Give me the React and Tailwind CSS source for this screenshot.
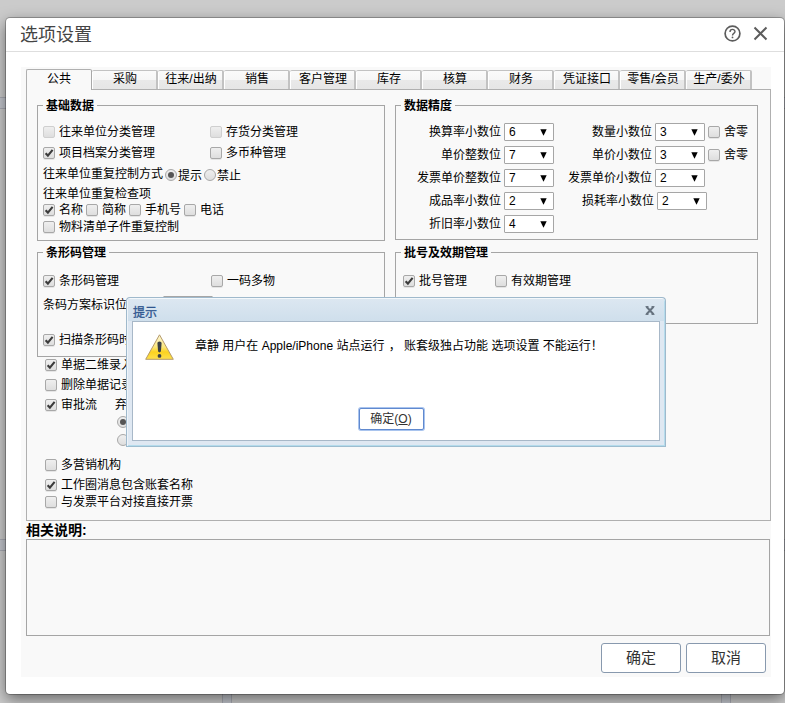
import React from "react";

const TABS = ["公共", "采购", "往来/出纳", "销售", "客户管理", "库存", "核算", "财务", "凭证接口", "零售/会员", "生产/委外"];

function Check({ checked, disabled }) {
  return (
    <span
      className={
        "flex h-3 w-3 shrink-0 items-center justify-center rounded-[2px] border bg-linear-to-b from-[#efefef] to-[#dedede] " +
        (disabled ? "border-[#cfcfcf]" : "border-[#a8a8a8] shadow-[0_1px_0_rgba(0,0,0,0.08)]")
      }
    >
      {checked && (
        <svg width="10" height="10" viewBox="0 0 10 10" className="shrink-0">
          <path d="M1.6 5.2 L3.9 7.6 L8.6 1.9" fill="none" stroke="#3c3c3c" strokeWidth="2.1" />
        </svg>
      )}
    </span>
  );
}

function Radio({ checked }) {
  return (
    <span className="flex h-3 w-3 shrink-0 items-center justify-center rounded-full border border-[#a8a8a8] bg-linear-to-b from-[#efefef] to-[#dedede]">
      {checked && <span className="h-1.5 w-1.5 rounded-full bg-[#555]" />}
    </span>
  );
}

function Option({ label, checked, disabled, className = "" }) {
  return (
    <label className={"flex shrink-0 items-center gap-1 " + className}>
      <Check checked={checked} disabled={disabled} />
      <span>{label}</span>
    </label>
  );
}

function Select({ value }) {
  return (
    <span className="flex h-[18px] w-[50px] shrink-0 items-center justify-between rounded-[1px] border border-[#a6a6a6] bg-white pr-[6px] pl-1">
      <span>{value}</span>
      <svg width="7" height="7" viewBox="0 0 7 7" className="mt-px">
        <path d="M0.3 0.3 H6.7 L3.5 6.8 Z" fill="#000" />
      </svg>
    </span>
  );
}

function Group({ title, className, children }) {
  return (
    <section className={"flex flex-col border border-[#a5a5a5] " + className}>
      <h3 className="-mt-px flex h-px items-center pl-[5px] font-bold">
        <span className="bg-[#f9f9f9] px-[3px] leading-4">{title}</span>
      </h3>
      {children}
    </section>
  );
}

function Precision({ label, value, className = "" }) {
  return (
    <div className={"flex h-[23px] items-center justify-end gap-[3px] " + className}>
      <span>{label}</span>
      <Select value={value} />
    </div>
  );
}

function Backdrop() {
  return (
    <div className="absolute inset-0 flex flex-col bg-[#cbcbcb]">
      <div className="mt-[97px] h-[12px] border-y border-[#a9abb3] bg-[#c3c6cd]" />
      <div className="mt-[430px] h-3 border-y border-[#a9abb3] bg-[#c3c6cd]" />
      <div className="flex grow pl-[222px]">
        <div className="w-[10px] border-x border-[#a9abb3] bg-[#c3c6cd]" />
        <div className="ml-[489px] w-[10px] border-x border-[#a9abb3] bg-[#c3c6cd]" />
      </div>
    </div>
  );
}

function Alert() {
  return (
    <div className="absolute top-[297px] left-[126px] flex h-[150px] w-[540px] flex-col rounded-t-[4px] border border-[#9fb9cc] border-b-[#9dbdd0] bg-[#dfe8f2] px-[5px] pb-[5px] shadow-[inset_0_1px_0_#f4f8fb,inset_1px_0_0_#eef4f9,inset_-1px_-1px_0_#b5dcec]">
      <div className="-mx-1 mt-px flex h-[22px] items-center justify-between bg-linear-to-b from-[#dce7f1] to-[#cfdfec] pr-[9px] pl-[5px]">
        <span className="pt-[5px] text-[#2f568f] [-webkit-text-stroke:0.3px_#2f568f]">提示</span>
        <svg width="10" height="9" viewBox="0 0 10 9" className="mt-px">
          <path d="M1.5 0.8 L8.5 8.2 M8.5 0.8 L1.5 8.2" stroke="#66727f" strokeWidth="2" />
          <path d="M0.5 0.6 H3.5 M6.5 0.6 H9.5 M0.5 8.4 H3.5 M6.5 8.4 H9.5" stroke="#66727f" strokeWidth="1" />
        </svg>
      </div>
      <div className="flex grow flex-col items-center border border-[#a8b8c8] bg-white">
        <div className="flex h-[48px] self-stretch pt-3 pl-3">
          <svg width="29" height="26" viewBox="0 0 29 26" className="shrink-0">
            <defs>
              <linearGradient id="warn" x1="0" y1="0" x2="0" y2="1">
                <stop offset="0" stopColor="#fdf8dc" />
                <stop offset="0.5" stopColor="#fbe77c" />
                <stop offset="0.7" stopColor="#fbd21f" />
                <stop offset="1" stopColor="#fde04c" />
              </linearGradient>
            </defs>
            <path d="M14.5 0.8 L28.3 25.3 H0.7 Z" fill="url(#warn)" stroke="#b59a6b" strokeLinejoin="round" />
            <path d="M12.4 9 Q12.4 7.4 14.5 7.4 Q16.6 7.4 16.6 9 L15.9 17.6 Q14.5 19.2 13.1 17.6 Z" fill="#3b4046" />
            <circle cx="14.5" cy="21.9" r="1.9" fill="#3b4046" />
          </svg>
          <p className="ml-[21px] h-5 pt-[2px] leading-5 whitespace-nowrap">
            章静 用户在 Apple/iPhone 站点运行 <span className="pr-px pl-px">，</span>{" "}
            <span className="-ml-px">账套级独占功能 选项设置 不能运行</span>！
          </p>
        </div>
        <button className="mt-[38px] mr-[10px] flex h-[22px] w-[65px] items-center justify-center rounded-[2px] border border-[#6089cf] bg-white text-[#333] shadow-[0_0_0_1px_#a9c4ee]">
          确定(<u>O</u>)
        </button>
      </div>
    </div>
  );
}

export default function App() {
  return (
    <div
      lang="zh-CN"
      className="relative h-[703px] w-[785px] overflow-hidden pt-[18px] pl-[6px] font-['Liberation_Sans','Noto_Sans_CJK_SC',sans-serif] text-[12px] leading-4 text-black"
    >
      <Backdrop />
      <main className="relative flex h-[676px] w-[778px] flex-col rounded-[4px] bg-white shadow-[0_0_0_1px_rgba(0,0,0,0.25),0_5px_15px_rgba(0,0,0,0.5)]">
        <header className="flex h-[34px] items-center border-b border-[#dedede] pr-4 pl-[14px]">
          <h1 className="grow text-[18px] leading-6 text-[#444]">选项设置</h1>
          <svg width="17" height="17" viewBox="0 0 17 17" className="-mt-[3px] mr-3">
            <circle cx="8.5" cy="8.5" r="7.4" fill="none" stroke="#5c5c5c" strokeWidth="1.7" />
            <path d="M6 6.9 C6 3.5 11 3.7 11 6.6 C11 8.4 8.5 8.4 8.5 10.4" fill="none" stroke="#5c5c5c" strokeWidth="1.4" />
            <circle cx="8.5" cy="12.4" r="0.9" fill="#5c5c5c" />
          </svg>
          <svg width="15" height="15" viewBox="0 0 15 15" className="-mt-[3px]">
            <path d="M1.5 1.5 L13.5 13.5 M13.5 1.5 L1.5 13.5" stroke="#5c5c5c" strokeWidth="2" />
          </svg>
        </header>

        <div className="mt-[15px] ml-[15px] flex h-[610px] w-[750px] flex-col bg-[#f9f9f9] pt-[2px] pl-[5px]">
          <nav className="flex h-5 items-end">
            {TABS.map((t, i) => (
              <div
                key={t}
                className={
                  i === 0
                    ? "z-10 -mb-px flex h-[21px] w-[66px] items-center justify-center self-start rounded-t-[2px] border border-b-0 border-[#b0b0b0] border-r-[#a8a8a8] bg-[#f9f9f9] pb-[2px]"
                    : "flex h-[19px] w-[66px] items-center justify-center rounded-t-[2px] border-t border-r-2 border-[#c2c2c2] bg-[linear-gradient(#fafafa_0%,#f6f6f6_50%,#e9e9e9_52%,#e6e6e6_100%)] pb-[2px] pl-[2px] shadow-[inset_1px_0_0_#fff]"
                }
              >
                {t}
              </div>
            ))}
          </nav>

          <div className="flex h-[432px] w-[745px] flex-col border border-[#b0b0b0] pt-[15px] pl-[10px]">
            <div className="flex items-start gap-[10px]">
              <div className="flex w-[348px] flex-col gap-[11px]">
                <Group title="基础数据" className="h-[136px]">
                  <div className="mt-[15px] flex h-[22px] items-center pl-[5px]">
                    <Option label="往来单位分类管理" disabled className="w-[167px]" />
                    <Option label="存货分类管理" disabled />
                  </div>
                  <div className="flex h-5 items-center pl-[5px]">
                    <Option label="项目档案分类管理" checked className="w-[167px]" />
                    <Option label="多币种管理" />
                  </div>
                  <div className="flex h-[22px] items-center pl-[5px]">
                    <span className="mr-[2px]">往来单位重复控制方式</span>
                    <span className="flex items-center pt-[2px]">
                      <Radio checked />
                      <span className="mr-[2px] ml-[1px] pt-px">提示</span>
                      <Radio />
                      <span className="ml-px pt-px">禁止</span>
                    </span>
                  </div>
                  <div className="flex h-[17px] items-center pl-[5px]">往来单位重复检查项</div>
                  <div className="flex h-4 items-center gap-[3px] pl-[5px]">
                    <Option label="名称" checked />
                    <Option label="简称" />
                    <Option label="手机号" />
                    <Option label="电话" />
                  </div>
                  <div className="flex h-[18px] items-center pl-[5px]">
                    <Option label="物料清单子件重复控制" />
                  </div>
                </Group>

                <Group title="条形码管理" className="h-[105px]">
                  <div className="mt-[17px] flex h-[22px] items-center pl-[5px]">
                    <Option label="条形码管理" checked className="w-[168px]" />
                    <Option label="一码多物" />
                  </div>
                  <div className="mt-[4px] flex h-[18px] items-center pl-[5px]">
                    <span className="w-[120px]">条码方案标识位</span>
                    <Select value="2" />
                  </div>
                  <div className="mt-[17px] flex h-[18px] items-center pl-[5px]">
                    <Option label="扫描条形码时" checked />
                  </div>
                </Group>
              </div>

              <div className="flex w-[363px] flex-col gap-3">
                <Group title="数据精度" className="h-[135px]">
                  <div className="mt-[14px] flex">
                    <div className="w-[158px]">
                      <Precision label="换算率小数位" value="6" />
                      <Precision label="单价整数位" value="7" />
                      <Precision label="发票单价整数位" value="7" />
                      <Precision label="成品率小数位" value="2" />
                      <Precision label="折旧率小数位" value="4" />
                    </div>
                    <div className="w-[151px]">
                      <Precision label="数量小数位" value="3" />
                      <Precision label="单价小数位" value="3" />
                      <Precision label="发票单价小数位" value="2" />
                      <Precision label="损耗率小数位" value="2" className="-mr-[2px]" />
                    </div>
                    <div className="pl-[3px]">
                      <Option label="舍零" className="h-[23px]" />
                      <Option label="舍零" className="h-[23px]" />
                    </div>
                  </div>
                </Group>

                <Group title="批号及效期管理" className="h-[72px]">
                  <div className="mt-[17px] flex h-[22px] items-center pl-[7px]">
                    <Option label="批号管理" checked className="w-[92px]" />
                    <Option label="有效期管理" />
                  </div>
                </Group>
              </div>
            </div>

            <div className="flex flex-col pl-2">
              <Option label="单据二维录入" checked className="-mt-[2px] h-5" />
              <Option label="删除单据记录" className="h-5" />
              <div className="flex h-5 items-center">
                <Option label="审批流" checked className="w-[70px]" />
                <span>弃</span>
              </div>
              <div className="flex h-[45px] flex-col gap-[6px] pt-px pl-[72px]">
                <Radio checked />
                <Radio />
              </div>
              <Option label="多营销机构" className="-mt-[5px] h-5" />
              <Option label="工作圈消息包含账套名称" checked className="h-5" />
              <Option label="与发票平台对接直接开票" className="-mt-px h-4" />
            </div>
          </div>

          <h2 className="flex h-[18px] items-center text-[14px] font-bold">相关说明:</h2>
          <div className="h-[97px] w-[744px] border border-[#a5a5a5]" />
          <div className="mt-[7px] flex justify-end gap-[5px] pr-[5px] text-[15px] text-[#333]">
            <button className="h-[30px] w-20 rounded-[3px] border border-[#8899ae] bg-white">确定</button>
            <button className="h-[30px] w-20 rounded-[3px] border border-[#8899ae] bg-white">取消</button>
          </div>
        </div>
      </main>
      <Alert />
    </div>
  );
}
